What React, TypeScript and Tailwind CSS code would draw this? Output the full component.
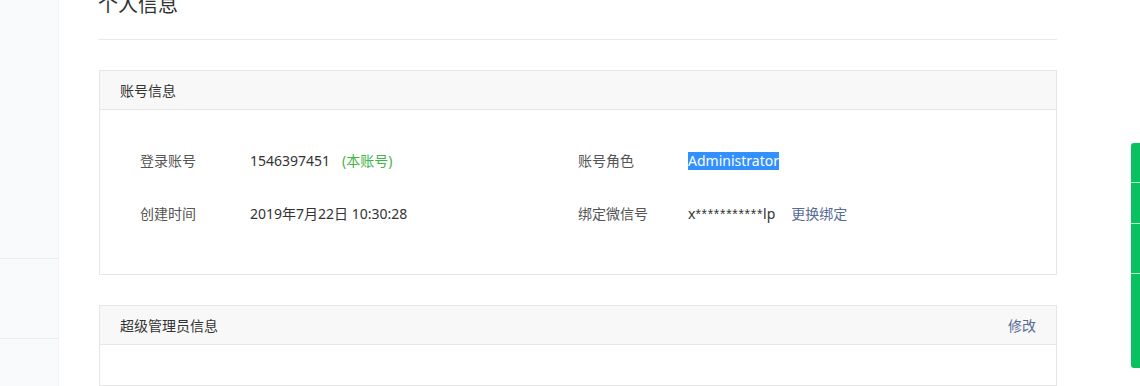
import React from "react";

const font = { fontFamily: '"Noto Sans", "Noto Sans CJK SC", sans-serif' };
const arial = { fontFamily: '"Liberation Sans", "Noto Sans CJK SC", sans-serif' };

function InfoRow({ label, children }: { label: string; children: React.ReactNode }) {
  return (
    <div className="flex items-center h-5 text-[14px] leading-5">
      <span className="w-[110px] shrink-0 text-[#555]">{label}</span>
      <span className="text-[#333] flex items-center whitespace-nowrap">{children}</span>
    </div>
  );
}

export default function App() {
  return (
    <div style={font} className="relative w-[1140px] h-[386px] overflow-hidden bg-white flex">
      {/* left nav stub */}
      <div className="w-[59px] shrink-0 bg-[#f8fafc] border-r border-[#f1f3f5] flex flex-col">
        <div className="h-[259px] border-b border-[#e9ecef]" />
        <div className="h-[80px] border-b border-[#e9ecef]" />
      </div>

      {/* main */}
      <div className="w-[959px] ml-[39px] flex flex-col">
        <div className="-mt-[5px] pb-[24px] border-b border-[#e8e8e8]">
          <h1 className="text-[20px] leading-5 text-[#333] font-normal">个人信息</h1>
        </div>

        <div className="mt-[30px] ml-px border border-[#e6e6e6]">
          <div className="h-[39px] px-5 flex items-center bg-[#f8f8f8] border-b border-[#e6e6e6] text-[14px] text-[#333]">
            账号信息
          </div>
          <div className="px-10 pt-[41px] pb-[50px] grid grid-cols-2 gap-y-[33px]">
            <InfoRow label="登录账号">
              1546397451
              <span className="ml-3 text-[#44b549]">(本账号)</span>
            </InfoRow>
            <InfoRow label="账号角色">
              <span className="bg-[#3390ff] text-white leading-[18px]">Administrator</span>
            </InfoRow>
            <InfoRow label="创建时间">2019年7月22日 10:30:28</InfoRow>
            <InfoRow label="绑定微信号">
              x<span style={arial} className="tracking-[0.7px]">***********</span>lp
              <span className="ml-4 text-[#576b95]">更换绑定</span>
            </InfoRow>
          </div>
        </div>

        <div className="mt-[30px] ml-px border border-[#e6e6e6] flex-1">
          <div className="h-[39px] px-5 flex items-center justify-between bg-[#f8f8f8] border-b border-[#e6e6e6] text-[14px] text-[#333]">
            <span>超级管理员信息</span>
            <span className="text-[#576b95]">修改</span>
          </div>
        </div>
      </div>

      {/* floating side toolbar */}
      <div className="absolute right-0 top-[143px] w-[9px] h-[225px] rounded-l-[3px] overflow-hidden bg-[#09c160] flex flex-col">
        <div className="h-[40px] border-b border-[#b9f0cf]" />
        <div className="h-[41px] border-b border-[#b9f0cf]" />
        <div className="h-[50px] border-b border-[#b9f0cf]" />
      </div>
    </div>
  );
}
